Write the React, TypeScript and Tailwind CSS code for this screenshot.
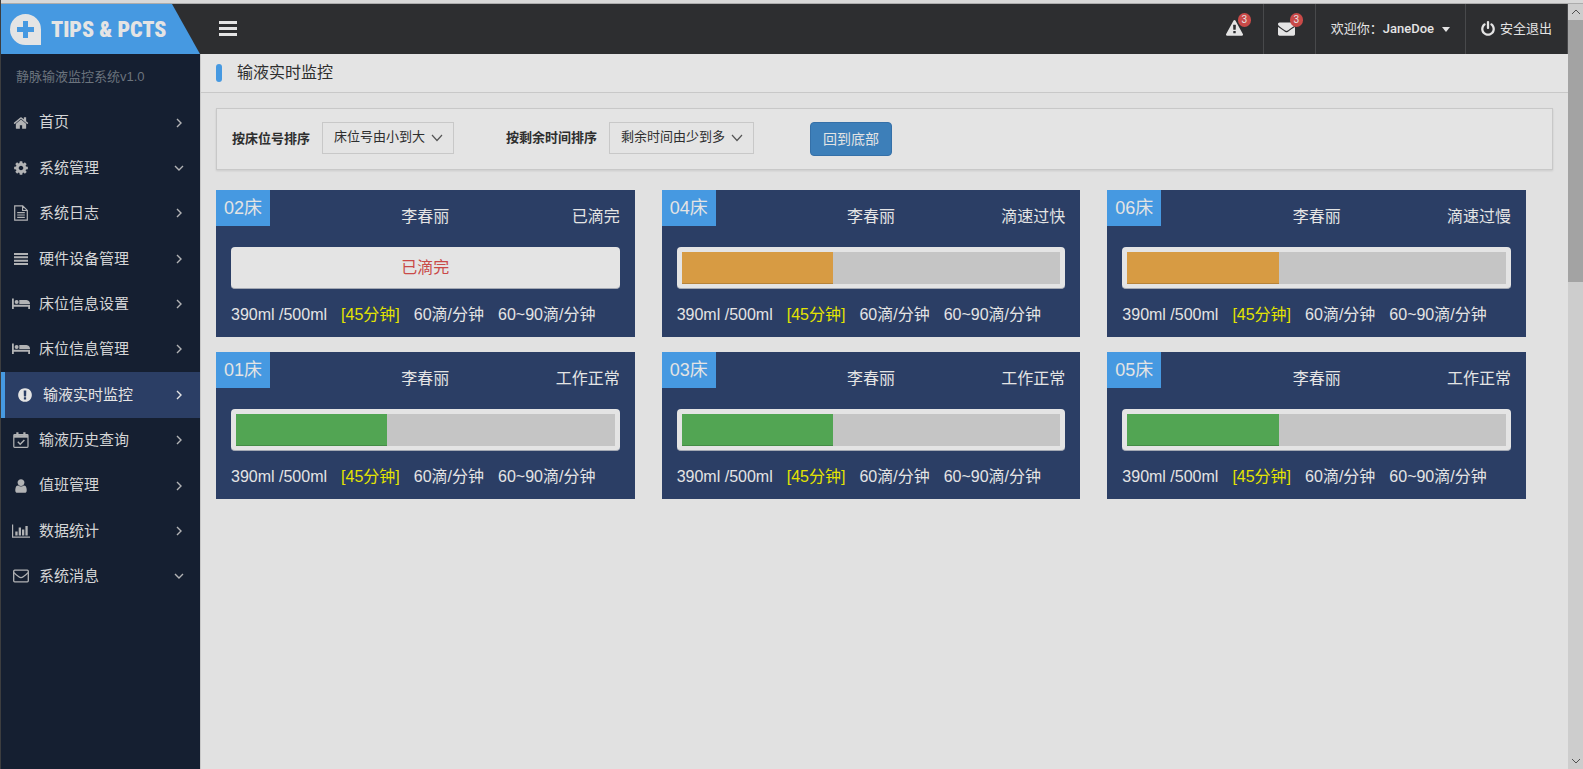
import type { ReactNode } from 'react'

type IconName =
  | 'home' | 'cog' | 'file' | 'lines' | 'bed' | 'alert' | 'calendar' | 'user' | 'chart' | 'mail'

interface MenuItem {
  label: string
  icon: IconName
  open?: boolean
  active?: boolean
}

interface Bed {
  no: string
  name: string
  status: string
  state: 'done' | 'warn' | 'ok'
  percent: number
}

const menu: MenuItem[] = [
  { label: '首页', icon: 'home' },
  { label: '系统管理', icon: 'cog', open: true },
  { label: '系统日志', icon: 'file' },
  { label: '硬件设备管理', icon: 'lines' },
  { label: '床位信息设置', icon: 'bed' },
  { label: '床位信息管理', icon: 'bed' },
  { label: '输液实时监控', icon: 'alert', active: true },
  { label: '输液历史查询', icon: 'calendar' },
  { label: '值班管理', icon: 'user' },
  { label: '数据统计', icon: 'chart' },
  { label: '系统消息', icon: 'mail', open: true },
]

const beds: Bed[] = [
  { no: '02床', name: '李春丽', status: '已滴完', state: 'done', percent: 100 },
  { no: '04床', name: '李春丽', status: '滴速过快', state: 'warn', percent: 40 },
  { no: '06床', name: '李春丽', status: '滴速过慢', state: 'warn', percent: 40 },
  { no: '01床', name: '李春丽', status: '工作正常', state: 'ok', percent: 40 },
  { no: '03床', name: '李春丽', status: '工作正常', state: 'ok', percent: 40 },
  { no: '05床', name: '李春丽', status: '工作正常', state: 'ok', percent: 40 },
]

const WARNING = 'M1024 1375v-190q0-14-9.5-23.5t-22.5-9.5h-192q-13 0-22.5 9.5t-9.5 23.5v190q0 14 9.5 23.5t22.5 9.5h192q13 0 22.5-9.5t9.5-23.5zm-2-374l18-459q0-12-10-19-13-11-24-11h-220q-11 0-24 11-10 7-10 21l17 457q0 10 10 16.5t24 6.5h185q14 0 23.5-6.5t10.5-16.5zm-14-934l768 1408q35 63-2 126-17 29-46.5 46t-63.5 17h-1536q-34 0-63.5-17t-46.5-46q-37-63-2-126l768-1408q17-31 47-49t65-18 65 18 47 49z'
const ENVELOPE = 'M1792 710v794q0 66-47 113t-113 47h-1472q-66 0-113-47t-47-113v-794q44 49 101 87 362 246 497 345 57 42 92.5 65.5t94.5 48 110 24.5h2q51 0 110-24.5t94.5-48 92.5-65.5q170-123 498-345 57-39 100-87zm0-294q0 79-49 151t-122 123q-376 261-468 325-10 7-42.5 31t-54 38.5-52 32.5-57.5 27-50 9h-2q-23 0-50-9t-57.5-27-52-32.5-54-38.5-42.5-31q-91-64-262-182.5t-205-142.5q-62-42-117-115.5t-55-136.5q0-78 41.5-130t118.5-52h1472q65 0 112.5 47t47.5 113z'
const POWER = 'M1664 896q0 156-61 298t-164 245-245 164-298 61-298-61-245-164-164-245-61-298q0-182 80.5-343t226.5-270q43-32 95.5-25t83.5 50q32 42 24.5 94.5t-49.5 84.5q-98 74-151.5 181t-53.5 228q0 104 40.5 198.5t109.5 163.5 163.5 109.5 198.5 40.5 198.5-40.5 163.5-109.5 109.5-163.5 40.5-198.5q0-121-53.5-228t-151.5-181q-42-32-49.5-84.5t24.5-94.5q31-43 84-50t95 25q146 109 226.5 270t80.5 343zm-640-768v640q0 52-38 90t-90 38-90-38-38-90v-640q0-52 38-90t90-38 90 38 38 90z'

const glyphs: Record<IconName, ReactNode> = {
  home: (
    <svg viewBox="0 0 1792 1792" className="size-4" fill="currentColor">
      <path d="M1472 992v480q0 26-19 45t-45 19h-384v-384h-256v384h-384q-26 0-45-19t-19-45v-480q0-1 .5-3t.5-3l575-474 575 474q1 2 1 6zm223-69l-62 74q-8 9-21 11h-3q-13 0-21-7l-692-577-692 577q-12 8-24 7-13-2-21-11l-62-74q-8-10-7-23.5t11-21.5l719-599q32-26 76-26t76 26l244 204v-195q0-14 9-23t23-9h192q14 0 23 9t9 23v408l219 182q10 8 11 21.5t-7 23.5z" />
    </svg>
  ),
  cog: (
    <svg viewBox="0 0 1792 1792" className="size-4" fill="currentColor">
      <path d="M1152 896q0-106-75-181t-181-75-181 75-75 181 75 181 181 75 181-75 75-181zm512-109v222q0 12-8 23t-20 13l-185 28q-19 54-39 91 35 50 107 138 10 12 10 25t-9 23q-27 37-99 108t-94 71q-12 0-26-9l-138-108q-44 23-91 38-16 136-29 186-7 28-36 28h-222q-14 0-24.5-8.5t-11.5-21.5l-28-184q-49-16-90-37l-141 107q-10 9-25 9-14 0-25-11-126-114-165-168-7-10-7-23 0-12 8-23 15-21 51-66.5t54-70.5q-27-50-41-99l-183-27q-13-2-21-12.5t-8-23.5v-222q0-12 8-23t19-13l186-28q14-46 39-92-40-57-107-138-10-12-10-24 0-10 9-23 26-36 98.5-107.5t94.5-71.5q13 0 26 10l138 107q44-23 91-38 16-136 29-186 7-28 36-28h222q14 0 24.5 8.5t11.5 21.5l28 184q49 16 90 37l142-107q9-9 24-9 13 0 25 10 129 119 165 170 7 8 7 22 0 12-8 23-15 21-51 66.5t-54 70.5q26 50 41 98l183 28q13 2 21 12.5t8 23.5z" />
    </svg>
  ),
  file: (
    <svg viewBox="0 0 16 16" className="size-4" fill="none" stroke="currentColor" strokeWidth="1.2">
      <path d="M1.7.8h8l4.6 4.6v9.8H1.7z M9.6.8v4.7h4.7 M4.2 7.6h7.6 M4.2 10h7.6 M4.2 12.4h7.6" />
    </svg>
  ),
  lines: (
    <svg viewBox="0 0 16 16" className="size-4" fill="currentColor">
      <path d="M1 2h14v2H1z M1 5.300h14v2H1z M1 8.700h14v2H1z M1 12h14v2H1z" />
    </svg>
  ),
  bed: (
    <svg viewBox="0 0 18 16" className="h-4 w-[18px]" fill="currentColor">
      <path d="M0 2.5h1.8v6.3H18V13h-1.8v-2.2H1.8V13H0z" />
      <circle cx="4.6" cy="6" r="2" />
      <path d="M7.3 4h7.2Q18 4.4 18 8H7.3z" />
    </svg>
  ),
  alert: (
    <svg viewBox="0 0 1792 1792" className="size-4" fill="currentColor">
      <path d="M896 128q209 0 385.5 103t279.5 279.5 103 385.5-103 385.5-279.5 279.5-385.5 103-385.5-103-279.5-279.5-103-385.5 103-385.5 279.5-279.5 385.5-103zm128 1247v-190q0-14-9-23.5t-22-9.5h-192q-13 0-23 10t-10 23v190q0 13 10 23t23 10h192q13 0 22-9.5t9-23.5zm-2-344l18-621q0-12-10-18-10-8-24-8h-220q-14 0-24 8-10 6-10 18l17 621q0 10 10 17.5t24 7.5h185q14 0 23.5-7.5t10.5-17.5z" />
    </svg>
  ),
  calendar: (
    <svg viewBox="0 0 16 16" className="size-4" fill="none" stroke="currentColor" strokeWidth="1.2">
      <rect x=".8" y="2.6" width="14.2" height="12.8" rx=".8" />
      <path d="M1 4.4h14" strokeWidth="2.6" />
      <path d="M4.4.3v4 M11.4.3v4" strokeWidth="2.2" />
      <path d="M4.8 9.8l2.4 2.4 4.2-4.2" strokeWidth="1.4" />
    </svg>
  ),
  user: (
    <svg viewBox="0 0 1792 1792" className="size-4" fill="currentColor">
      <path d="M1536 1399q0 109-62.5 187t-150.5 78h-854q-88 0-150.5-78t-62.5-187q0-85 8.5-160.5t31.5-152 58.5-131 94-89 134.5-34.5q131 128 313 128t313-128q76 0 134.5 34.5t94 89 58.5 131 31.5 152 8.5 160.5zm-256-887q0 159-112.5 271.5t-271.5 112.5-271.5-112.5-112.5-271.5 112.5-271.5 271.5-112.5 271.5 112.5 112.5 271.5z" />
    </svg>
  ),
  chart: (
    <svg viewBox="0 0 18 16" className="h-4 w-[18px]" fill="currentColor">
      <path d="M0 1.5h1.2v12H18v1.2H0z M3.3 8.5h2.3v4H3.3z M6.7 4.5H9v8H6.7z M10 6.5h2.3v6H10z M13.4 3h2.3v9.5h-2.3z" />
    </svg>
  ),
  mail: (
    <svg viewBox="0 0 16 14" className="h-[14px] w-4" fill="none" stroke="currentColor" strokeWidth="1.3">
      <rect x=".7" y="1.2" width="14.6" height="11.6" rx="1" />
      <path d="M1 3.6q1 1.4 4.8 4.1 2.2 1.8 4.4 0Q14 5 15 3.6" />
    </svg>
  ),
}

const fillColor = {
  done: 'bg-[#e4e4e4]',
  warn: 'bg-[#d79b43]',
  ok: 'bg-[#52a553]',
}

function Chevron({ down = false }: { down?: boolean }) {
  return (
    <svg viewBox="0 0 10 10" className="size-[10px]" fill="none" stroke="currentColor" strokeWidth="1.4">
      <path d={down ? 'M1 3l4 4 4-4' : 'M3 1l4 4-4 4'} />
    </svg>
  )
}

function Logo() {
  return (
    <a href="#" className="flex h-full w-[199px] items-center gap-[10px] bg-[#4699e1] pl-[9px] [clip-path:polygon(0_0,171px_0,100%_100%,0_100%)]">
      <svg viewBox="0 0 31 31" className="size-[31px] shrink-0" fill="#e4e4e4" fillRule="evenodd">
        <path d="M15.500 0A15.500 15.500 0 0 1 31 15.500V31H15.500A15.500 15.500 0 0 1 15.500 0z M13 7v6H7v5h6v6h5v-6h6v-5h-6V7z" />
      </svg>
      <span className="whitespace-nowrap font-[Impact,'Roboto_Condensed','Liberation_Sans',sans-serif] text-[22px] font-black leading-[31px] text-[#e4e4e4]">
        TIPS &amp; PCTS
      </span>
    </a>
  )
}

function IconLink({ label, path, count }: { label: string; path: string; count: number }) {
  return (
    <a href="#" aria-label={label} className="flex w-[52px] items-center border-r border-[#48494b] pb-[2px] pl-[14px]">
      <span className="relative">
        <svg viewBox="0 0 1792 1792" className="size-[17px]" fill="currentColor">
          <path d={path} />
        </svg>
        <span className="absolute -right-2 -top-[7px] flex h-[14px] w-[13px] items-center justify-center rounded-full bg-[#c94a48] text-[10px] leading-[14px]">
          {count}
        </span>
      </span>
    </a>
  )
}

function Header() {
  return (
    <header className="flex h-[50px] bg-[#2d2e30] text-[13px] text-[#e4e4e4]">
      <Logo />
      <button aria-label="菜单" className="ml-[19px] flex flex-col justify-center gap-[3px] pb-px">
        <span className="h-[3px] w-[18px] bg-[#e4e4e4]" />
        <span className="h-[3px] w-[18px] bg-[#e4e4e4]" />
        <span className="h-[3px] w-[18px] bg-[#e4e4e4]" />
      </button>
      <nav className="ml-auto flex">
        <IconLink label="报警" path={WARNING} count={3} />
        <IconLink label="消息" path={ENVELOPE} count={3} />
        <button className="flex items-center border-r border-[#48494b] px-[15px]">
          欢迎你：<span className="font-[Roboto,sans-serif] font-medium">JaneDoe</span>
          <span className="ml-2 border-x-4 border-t-[5px] border-x-transparent border-t-[#e4e4e4]" />
        </button>
        <a href="#" className="flex items-center gap-1 border-r border-[#48494b] pl-[14px] pr-[15px]">
          <svg viewBox="0 0 1792 1792" className="size-4" fill="currentColor">
            <path d={POWER} />
          </svg>
          安全退出
        </a>
      </nav>
    </header>
  )
}

function Sidebar() {
  return (
    <aside className="w-[199px] shrink-0 bg-[#151f31]">
      <p className="flex h-[46px] items-center pl-[15px] text-[13px] text-[#6b737d]">静脉输液监控系统v1.0</p>
      <nav className="grid h-[499px] auto-rows-fr">
        {menu.map((item) => (
          <a
            key={item.label}
            href="#"
            className={
              item.active
                ? 'flex items-center border-l-4 border-[#4699e1] bg-[#2b3e65] pl-[11px] pr-4 text-[15px] text-[#e4e4e4]'
                : 'flex items-center pl-[11px] pr-4 text-[15px] text-[#d4d5d6]'
            }
          >
            <span className={item.active ? 'mr-[9px] flex w-[18px] justify-center' : 'mr-[9px] flex w-[18px] justify-center text-[#b2b3b5]'}>
              {glyphs[item.icon]}
            </span>
            {item.label}
            <span className={item.active ? 'ml-auto' : 'ml-auto text-[#b2b3b5]'}>
              <Chevron down={item.open} />
            </span>
          </a>
        ))}
      </nav>
    </aside>
  )
}

function SortSelect({ id, label, option }: { id: string; label: string; option: string }) {
  return (
    <div className="flex gap-3">
      <label htmlFor={id} className="self-center font-bold">{label}</label>
      <div className="relative self-start">
        <select id={id} className="h-8 appearance-none border border-[#c8c8c8] bg-transparent pb-[2px] pl-[11px] pr-[27px]">
          <option>{option}</option>
        </select>
        <svg viewBox="0 0 12 8" className="pointer-events-none absolute right-[11px] top-3 h-2 w-3" fill="none" stroke="#555" strokeWidth="1.2">
          <path d="M1 1l5 5.500 5-5.500" />
        </svg>
      </div>
    </div>
  )
}

function BedCard({ bed }: { bed: Bed }) {
  return (
    <article className="relative bg-[#2b3e65] px-[15px] pb-[11px] pt-4 text-[16px] leading-[22px] text-[#e4e4e4]">
      <h2 className="absolute left-0 top-0 h-9 w-[54px] bg-[#4699e1] text-center text-[18px] leading-9">{bed.no}</h2>
      <div className="grid grid-cols-3">
        <span className="col-start-2 text-center">{bed.name}</span>
        <span className="text-right">{bed.status}</span>
      </div>
      <div className="mt-[19px] h-[42px] rounded-[4px] border-b border-[#a3a8b3] bg-[#e4e4e4] p-[5px]">
        {bed.state === 'done' ? (
          <p className="text-center leading-8 text-[#c94a48]">已滴完</p>
        ) : (
          <div className="h-8 bg-[#c5c5c5]">
            <div
              className={`h-full shadow-[inset_0_-1px_0_rgba(0,0,0,0.15)] ${fillColor[bed.state]}`}
              style={{ width: `${bed.percent}%` }}
            />
          </div>
        )}
      </div>
      <p className="mt-[15px] flex gap-[14px] whitespace-nowrap">
        <span>390ml /500ml</span>
        <span className="text-[#e4e400]">[45分钟]</span>
        <span>60滴/分钟</span>
        <span>60~90滴/分钟</span>
      </p>
    </article>
  )
}

function Scrollbar() {
  return (
    <div className="flex w-[15px] shrink-0 flex-col bg-[#cdcdcd] text-[#505050]">
      <span className="flex h-4 items-center justify-center">
        <svg viewBox="0 0 10 6" className="h-[6px] w-[10px]" fill="none" stroke="currentColor">
          <path d="M1 5l4-4 4 4" />
        </svg>
      </span>
      <span className="h-[262px] bg-[#a3a3a3]" />
      <span className="mt-auto flex h-4 items-center justify-center">
        <svg viewBox="0 0 10 6" className="h-[6px] w-[10px]" fill="none" stroke="currentColor">
          <path d="M1 1l4 4 4-4" />
        </svg>
      </span>
    </div>
  )
}

export default function App() {
  return (
    <div className="flex min-h-screen flex-col border-l border-[#3c3d3f] bg-[#e1e1e1] font-['Liberation_Sans','Noto_Sans_CJK_SC',sans-serif] text-[#2e2e2e]">
      <div className="h-1 border-b border-[#acacac] bg-[#d8d8d8]" />
      <div className="flex grow">
        <div className="flex min-w-0 grow flex-col">
          <Header />
          <div className="flex grow">
            <Sidebar />
            <main className="min-w-0 grow border-l border-[#c8c8c8]">
              <div className="flex h-[39px] items-center gap-[15px] border-b border-[#c8c8c8] bg-[#e4e4e4] pl-[15px]">
                <span className="h-[18px] w-[6px] rounded-[3px] bg-[#4699e1]" />
                <h1 className="text-[16px]">输液实时监控</h1>
              </div>
              <div className="p-[15px]">
                <form className="flex border border-[#c8c8c8] bg-[#e4e4e4] px-[15px] py-[13px] text-[13px] shadow-[0_1px_2px_rgba(0,0,0,0.1)]">
                  <SortSelect id="sort-bed" label="按床位号排序" option="床位号由小到大" />
                  <div className="ml-[52px]">
                    <SortSelect id="sort-time" label="按剩余时间排序" option="剩余时间由少到多" />
                  </div>
                  <button
                    type="button"
                    className="ml-14 h-[34px] rounded-[4px] border border-[#3570a8] bg-[#3d7fb9] px-3 text-[14px] text-[#e4e4e4]"
                  >
                    回到底部
                  </button>
                </form>
                <div className="mt-5 grid grid-cols-3 gap-x-[27px] gap-y-[15px] pr-[27px]">
                  {beds.map((bed) => (
                    <BedCard key={bed.no} bed={bed} />
                  ))}
                </div>
              </div>
            </main>
          </div>
        </div>
        <Scrollbar />
      </div>
    </div>
  )
}
